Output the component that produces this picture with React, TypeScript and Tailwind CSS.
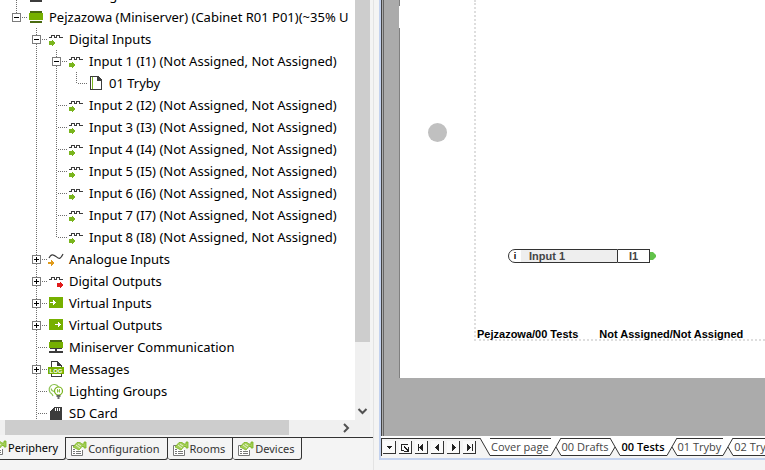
import { useState } from 'react';
import type { ReactNode } from 'react';
import clsx from 'clsx';

type IconName =
  | 'block'
  | 'miniserver'
  | 'digitalIn'
  | 'digitalOut'
  | 'analogueIn'
  | 'virtualIn'
  | 'virtualOut'
  | 'network'
  | 'log'
  | 'bulbs'
  | 'sdCard'
  | 'page';

// through: line passes top to bottom, tee: passes and branches, corner: ends in a branch
type Cell = 'empty' | 'through' | 'tee' | 'corner';

type TreeRow = {
  label: string;
  icon: IconName;
  cells: Cell[];
  expander?: 'open' | 'closed';
};

const WAVE = 'M1 6.5H3.5V4.5H6.5V6.5H8.5V4.5H11.5V6.5H15';

const ICONS: Record<IconName, ReactNode> = {
  block: <path d="M2 2h12v13H2z" fill="#3c3c3c" />,
  miniserver: (
    <>
      <path d="M2 2h12v2H2zM2 12h12v2H2z" fill="#4a6b10" />
      <path d="M1 4h14v7H1z" fill="#76b000" />
    </>
  ),
  digitalIn: (
    <>
      <path d={WAVE} fill="none" stroke="#3c3c3c" />
      <path d="M1 10h3V9h1v1h1v1h1v2H6v1H5v1H4v-1H1z" fill="#7ab51d" />
    </>
  ),
  digitalOut: (
    <>
      <path d={WAVE} fill="none" stroke="#3c3c3c" />
      <path d="M9 10h3V9h1v1h1v1h1v2h-1v1h-1v1h-1v-1H9z" fill="#e01b1b" />
    </>
  ),
  analogueIn: (
    <>
      <path d="M1 7C3 3 5 3 8 5.500S12 9 15 3" fill="none" stroke="#3c3c3c" strokeWidth="1.200" shapeRendering="auto" />
      <path d="M0 11h3V9h1v1h1v1h1v2H5v1H4v1H3v-2H0z" fill="#e09a1a" />
    </>
  ),
  virtualIn: (
    <>
      <path d="M1 2h14v11H1z" fill="#76b000" />
      <path d="M2 7h3V5h1v1h1v1h1v1H7v1H6v1H5V8H2z" fill="#fff" />
    </>
  ),
  virtualOut: (
    <>
      <path d="M1 2h14v11H1z" fill="#76b000" />
      <path d="M7 7h3V5h1v1h1v1h1v1h-1v1h-1v1h-1V8H7z" fill="#fff" />
    </>
  ),
  network: (
    <>
      <path d="M2 1h12v2H2z" fill="#4a6b10" />
      <path d="M1 3h14v6H1z" fill="#76b000" />
      <path d="M2 9h12v1H2zM7 10h2v2H7zM1 12h14v2H1z" fill="#3c3c3c" />
    </>
  ),
  log: (
    <>
      <path d="M3.500 15.500v-15h6l4 4v11z" fill="#fff" stroke="#3c3c3c" />
      <path d="M9 0l5 5H9z" fill="#3c3c3c" />
      <path d="M0 6h16v7H0z" fill="#76b000" />
      <text x="8" y="12" fontSize="6" fontWeight="700" fontFamily="Liberation Sans, sans-serif" textAnchor="middle" fill="#fff">
        LOG
      </text>
    </>
  ),
  bulbs: (
    <g fill="none" shapeRendering="auto">
      <path d="M4 11a5 5 0 1 1 6.500-7M4 11l1 2M3 5.500l1 2 2 1" stroke="#8cc152" strokeWidth="1.200" />
      <circle cx="10.500" cy="8" r="4" stroke="#7ab51d" strokeWidth="1.200" />
      <path d="M9.500 6v3.500M11.500 6v3.500M9.500 8h2" stroke="#7ab51d" strokeWidth="0.800" />
      <path d="M8.500 13h4M9.500 15h2" stroke="#3c3c3c" strokeWidth="1.500" />
    </g>
  ),
  sdCard: (
    <>
      <path d="M2 6l4-4h8v13H2z" fill="#3c3c3c" />
      <path d="M7 3h1v3H7zM9 3h1v3H9zM11 3h1v3h-1z" fill="#fff" />
    </>
  ),
  page: (
    <>
      <path d="M2 1h8l4 4v10H2zM3 2v12h10V6H9V2z" fill="#3c3c3c" fillRule="evenodd" />
      <path d="M4 2h1v12H4z" fill="#7ab51d" />
    </>
  ),
};

const ROWS: TreeRow[] = [
  { label: 'Monitoring', icon: 'block', cells: ['tee'] },
  { label: 'Pejzazowa (Miniserver) (Cabinet R01 P01)(~35% U', icon: 'miniserver', cells: ['corner'], expander: 'open' },
  { label: 'Digital Inputs', icon: 'digitalIn', cells: ['empty', 'tee'], expander: 'open' },
  { label: 'Input 1 (I1) (Not Assigned, Not Assigned)', icon: 'digitalIn', cells: ['empty', 'through', 'tee'], expander: 'open' },
  { label: '01 Tryby', icon: 'page', cells: ['empty', 'through', 'through', 'corner'] },
  ...[2, 3, 4, 5, 6, 7, 8].map((n): TreeRow => ({
    label: `Input ${n} (I${n}) (Not Assigned, Not Assigned)`,
    icon: 'digitalIn',
    cells: ['empty', 'through', n === 8 ? 'corner' : 'tee'],
  })),
  { label: 'Analogue Inputs', icon: 'analogueIn', cells: ['empty', 'tee'], expander: 'closed' },
  { label: 'Digital Outputs', icon: 'digitalOut', cells: ['empty', 'tee'], expander: 'closed' },
  { label: 'Virtual Inputs', icon: 'virtualIn', cells: ['empty', 'tee'], expander: 'closed' },
  { label: 'Virtual Outputs', icon: 'virtualOut', cells: ['empty', 'tee'], expander: 'closed' },
  { label: 'Miniserver Communication', icon: 'network', cells: ['empty', 'tee'] },
  { label: 'Messages', icon: 'log', cells: ['empty', 'tee'], expander: 'closed' },
  { label: 'Lighting Groups', icon: 'bulbs', cells: ['empty', 'tee'] },
  { label: 'SD Card', icon: 'sdCard', cells: ['empty', 'tee'] },
];

const CELL_PATHS: Record<Cell, string> = {
  empty: '',
  through: 'M10.500 0v22',
  tee: 'M10.500 0v22M12 11.500h10',
  corner: 'M10.500 0v12M12 11.500h10',
};

const PANE_TABS = ['Periphery', 'Configuration', 'Rooms', 'Devices'];
const SHEETS = ['Cover page', '00 Drafts', '00 Tests', '01 Tryby', '02 Tryby'];

const NAV_BUTTONS = [
  { label: 'List pages', d: 'M4 5h5v1H8v1H7v1H6V7H5V6H4z' },
  { label: 'Open page', d: 'M2 3h7v1H3v5h2v1H2zM5 5h1v1h1v1h1v1h1V6h1v5H5v-1h3V9H7V8H6V7H5z' },
  { label: 'First page', d: 'M3 3h1v7H3zM8 3v7H7V9H6V8H5V7H4V6h1V5h1V4h1V3z' },
  { label: 'Previous page', d: 'M8 3v7H7V9H6V8H5V7H4V6h1V5h1V4h1V3z' },
  { label: 'Next page', d: 'M5 3v7h1V9h1V8h1V7h1V6H8V5H7V4H6V3z' },
  { label: 'Last page', d: 'M4 3v7h1V9h1V8h1V7h1V6H7V5H6V4H5V3zM9 3h1v7H9z' },
];

function visibleRows(open: Record<string, boolean>) {
  let hiddenBelow = Infinity;
  return ROWS.filter(row => {
    const depth = row.cells.length;
    if (depth > hiddenBelow) return false;
    hiddenBelow = row.expander && !open[row.label] ? depth : Infinity;
    return true;
  });
}

function TreeItem({ row, open, onToggle }: { row: TreeRow; open: boolean; onToggle: () => void }) {
  return (
    <li className="flex h-[22px] shrink-0 items-center whitespace-nowrap">
      {row.cells.map((cell, i) => (
        <span key={i} className="relative h-[22px] w-5 shrink-0">
          <svg width="20" height="22" className="overflow-visible" shapeRendering="crispEdges">
            <path d={CELL_PATHS[cell]} fill="none" stroke="#6e6e6e" strokeDasharray="1 1" />
          </svg>
          {row.expander && i === row.cells.length - 1 && (
            <button
              type="button"
              onClick={onToggle}
              aria-label={`Toggle ${row.label}`}
              className="absolute top-[7px] left-[6px] size-[9px] border border-[#7c7c7c] bg-white"
            >
              <svg width="7" height="7" className="block" shapeRendering="crispEdges">
                <path d={open ? 'M1 3h5v1H1z' : 'M1 3h5v1H1zM3 1h1v5H3z'} fill="#000" />
              </svg>
            </button>
          )}
        </span>
      ))}
      <svg width="16" height="16" className="ml-[2px] shrink-0" shapeRendering="crispEdges">
        {ICONS[row.icon]}
      </svg>
      <span className="ml-[5px]">{row.label}</span>
    </li>
  );
}

function TabIcon() {
  return (
    <svg width="17" height="16" className="shrink-0">
      <path d="M6 4.500H1.500v10h11V9" fill="#fff" stroke="#777" />
      <path d="M3 8.500h2M3 10.500h2M3 12.500h2M6 10.500h5M6 12.500h5" stroke="#777" />
      <path d="M3 6l4-4.500h3L12 3h2V1h2v6h-2V5.500h-2L9 9z" fill="#a5cf5a" stroke="#7ab51d" strokeWidth="0.800" />
      <path d="M6 4l4 3M8 3l3 2" stroke="#fff" strokeWidth="0.700" />
    </svg>
  );
}

// Slanted edge between two sheet tabs; the active tab is drawn in front of its neighbours
function SheetEdge({ before, after }: { before: 'none' | 'front' | 'back'; after: 'front' | 'back' }) {
  return (
    <svg width="10" height="18" className="shrink-0">
      {before !== 'none' && (
        <path d={before === 'front' ? 'M0 0h10L0 17.500z' : 'M0 17.500L5 9 0 0z'} fill="#fff" />
      )}
      <path d={after === 'front' ? 'M0 0h10v17.500z' : 'M5 9l5-9v17.500z'} fill="#fff" />
      {before !== 'none' && <path d={before === 'front' ? 'M0 17.500L10 0' : 'M0 17.500L5 9'} stroke="#333" />}
      <path d={after === 'front' ? 'M0 0l10 17.500' : 'M5 9l5 8.500'} stroke="#333" />
    </svg>
  );
}

function PeripheryPane() {
  const [tab, setTab] = useState('Periphery');
  const [open, setOpen] = useState<Record<string, boolean>>(() =>
    Object.fromEntries(ROWS.map(row => [row.label, row.expander === 'open'])),
  );

  return (
    <section className="flex w-[374px] shrink-0 flex-col border-r border-[#e3e3e3]">
      <div className="flex min-h-0 flex-1">
        <div className="min-w-0 flex-1 overflow-hidden bg-white">
          <ul className="-mt-4 pl-[6px] font-['Noto_Sans',sans-serif] text-[13px] leading-[22px] text-black">
            {visibleRows(open).map(row => (
              <TreeItem
                key={row.label}
                row={row}
                open={open[row.label]}
                onToggle={() => setOpen(prev => ({ ...prev, [row.label]: !prev[row.label] }))}
              />
            ))}
          </ul>
        </div>
        {/* Vertical scrollbar */}
        <div className="mr-[3px] flex w-[15px] flex-col justify-between bg-[#f0f0f0]">
          <div className="h-[342px] bg-[#cdcdcd]" />
          <svg width="15" height="16">
            <path d="M3.500 5l4 4 4-4" fill="none" stroke="#505050" strokeWidth="2" />
          </svg>
        </div>
      </div>
      {/* Horizontal scrollbar */}
      <div className="mr-[3px] flex h-[15px] shrink-0 items-center justify-between bg-[#f0f0f0] pl-[5px]">
        <div className="h-full w-[284px] bg-[#cdcdcd]" />
        <svg width="32" height="15">
          <path d="M6 4l4 4-4 4" fill="none" stroke="#505050" strokeWidth="2" />
        </svg>
      </div>
      <div role="tablist" className="mt-[2px] mb-[10px] flex h-[23px] shrink-0 overflow-hidden">
        {PANE_TABS.map((name, i) => (
          <button
            key={name}
            type="button"
            role="tab"
            aria-selected={tab === name}
            onClick={() => setTab(name)}
            className={clsx(
              "flex shrink-0 items-center gap-px rounded-b-[3px] border-r border-b border-[#333] pr-[7px] pl-1 font-['Noto_Sans',sans-serif] text-[11px] leading-4",
              i === 0 && '-ml-[14px]',
              tab === name ? 'text-black' : 'border-t text-[#333]',
            )}
          >
            <TabIcon />
            {name}
          </button>
        ))}
        <div className="h-px flex-1 bg-[#333]" />
      </div>
    </section>
  );
}

function FunctionBlock() {
  return (
    <div className="absolute top-[249px] left-[108px] flex h-[14px] items-center font-['Liberation_Sans',Arial,sans-serif] text-[11px] leading-3 font-bold text-[#444]">
      <div className="flex h-full w-[110px] items-center overflow-hidden rounded-l-[7px] border border-[#333] bg-white">
        <span className="w-3 text-center text-[9px] text-black">i</span>
        <span className="flex h-full flex-1 items-center bg-[#eee] pl-2">Input 1</span>
      </div>
      <div className="flex h-full w-8 items-center justify-center border border-l-0 border-[#333] bg-white">I1</div>
      <svg width="6" height="8">
        <path d="M0 0h3l3 3v2L3 8H0z" fill="#62c24a" />
      </svg>
    </div>
  );
}

function SheetPane() {
  const [sheet, setSheet] = useState('00 Tests');

  return (
    <section className="mb-[10px] ml-[5px] flex min-w-0 flex-1 flex-col border-b-2 border-l-2 border-[#c3d2ef]">
      <div className="flex min-h-0 flex-1 border-l border-[#444] bg-[#ababab]">
        <div className="w-[2px] border-r border-[#666]" />
        <div className="relative mb-[58px] ml-[15px] flex min-w-0 flex-1 border-l border-[#808080] bg-white">
          <div className="absolute top-[6px] -left-px h-[22px] w-px bg-white" />
          <div className="absolute top-[123px] left-[28px] size-[19px] rounded-full bg-[#c0c0c0]" />
          <div className="mb-[37px] ml-[74px] flex flex-1 items-end gap-[21px] border-b-2 border-l-2 border-dotted border-[#dedede] pl-px font-['Liberation_Sans',Arial,sans-serif] text-[11px] leading-[10px] font-bold whitespace-nowrap text-black">
            <span>Pejzazowa/00 Tests</span>
            <span>Not Assigned/Not Assigned</span>
          </div>
          <FunctionBlock />
        </div>
      </div>
      <div className="h-[2px] shrink-0 bg-white" />
      <div className="mb-[2px] flex h-[18px] shrink-0 overflow-hidden">
        <div className="flex shrink-0 items-center gap-[3px] border-t border-l border-[#333] pr-1 pl-px">
          {NAV_BUTTONS.map(button => (
            <button
              key={button.label}
              type="button"
              aria-label={button.label}
              className="size-[13px] border-r border-b border-[#333] bg-[#fafafa]"
            >
              <svg width="12" height="12" className="block" shapeRendering="crispEdges">
                <path d={button.d} fill="#222" />
              </svg>
            </button>
          ))}
        </div>
        {SHEETS.map((name, i) => {
          const active = sheet === name;
          return (
            <div key={name} className="flex shrink-0">
              <SheetEdge
                before={i === 0 ? 'none' : active ? 'back' : 'front'}
                after={i === 0 || active ? 'front' : 'back'}
              />
              <button
                type="button"
                onClick={() => setSheet(name)}
                className={clsx(
                  "border-b border-[#333] bg-white pr-[2px] pl-px font-['Open_Sans','Noto_Sans',sans-serif] text-[11px] leading-4 whitespace-nowrap",
                  active ? 'pt-px font-semibold text-black' : 'border-t text-[#444]',
                )}
              >
                {name}
              </button>
            </div>
          );
        })}
      </div>
    </section>
  );
}

export default function App() {
  return (
    <main className="flex h-screen overflow-hidden bg-[#f4f4f4]">
      <PeripheryPane />
      <SheetPane />
    </main>
  );
}
